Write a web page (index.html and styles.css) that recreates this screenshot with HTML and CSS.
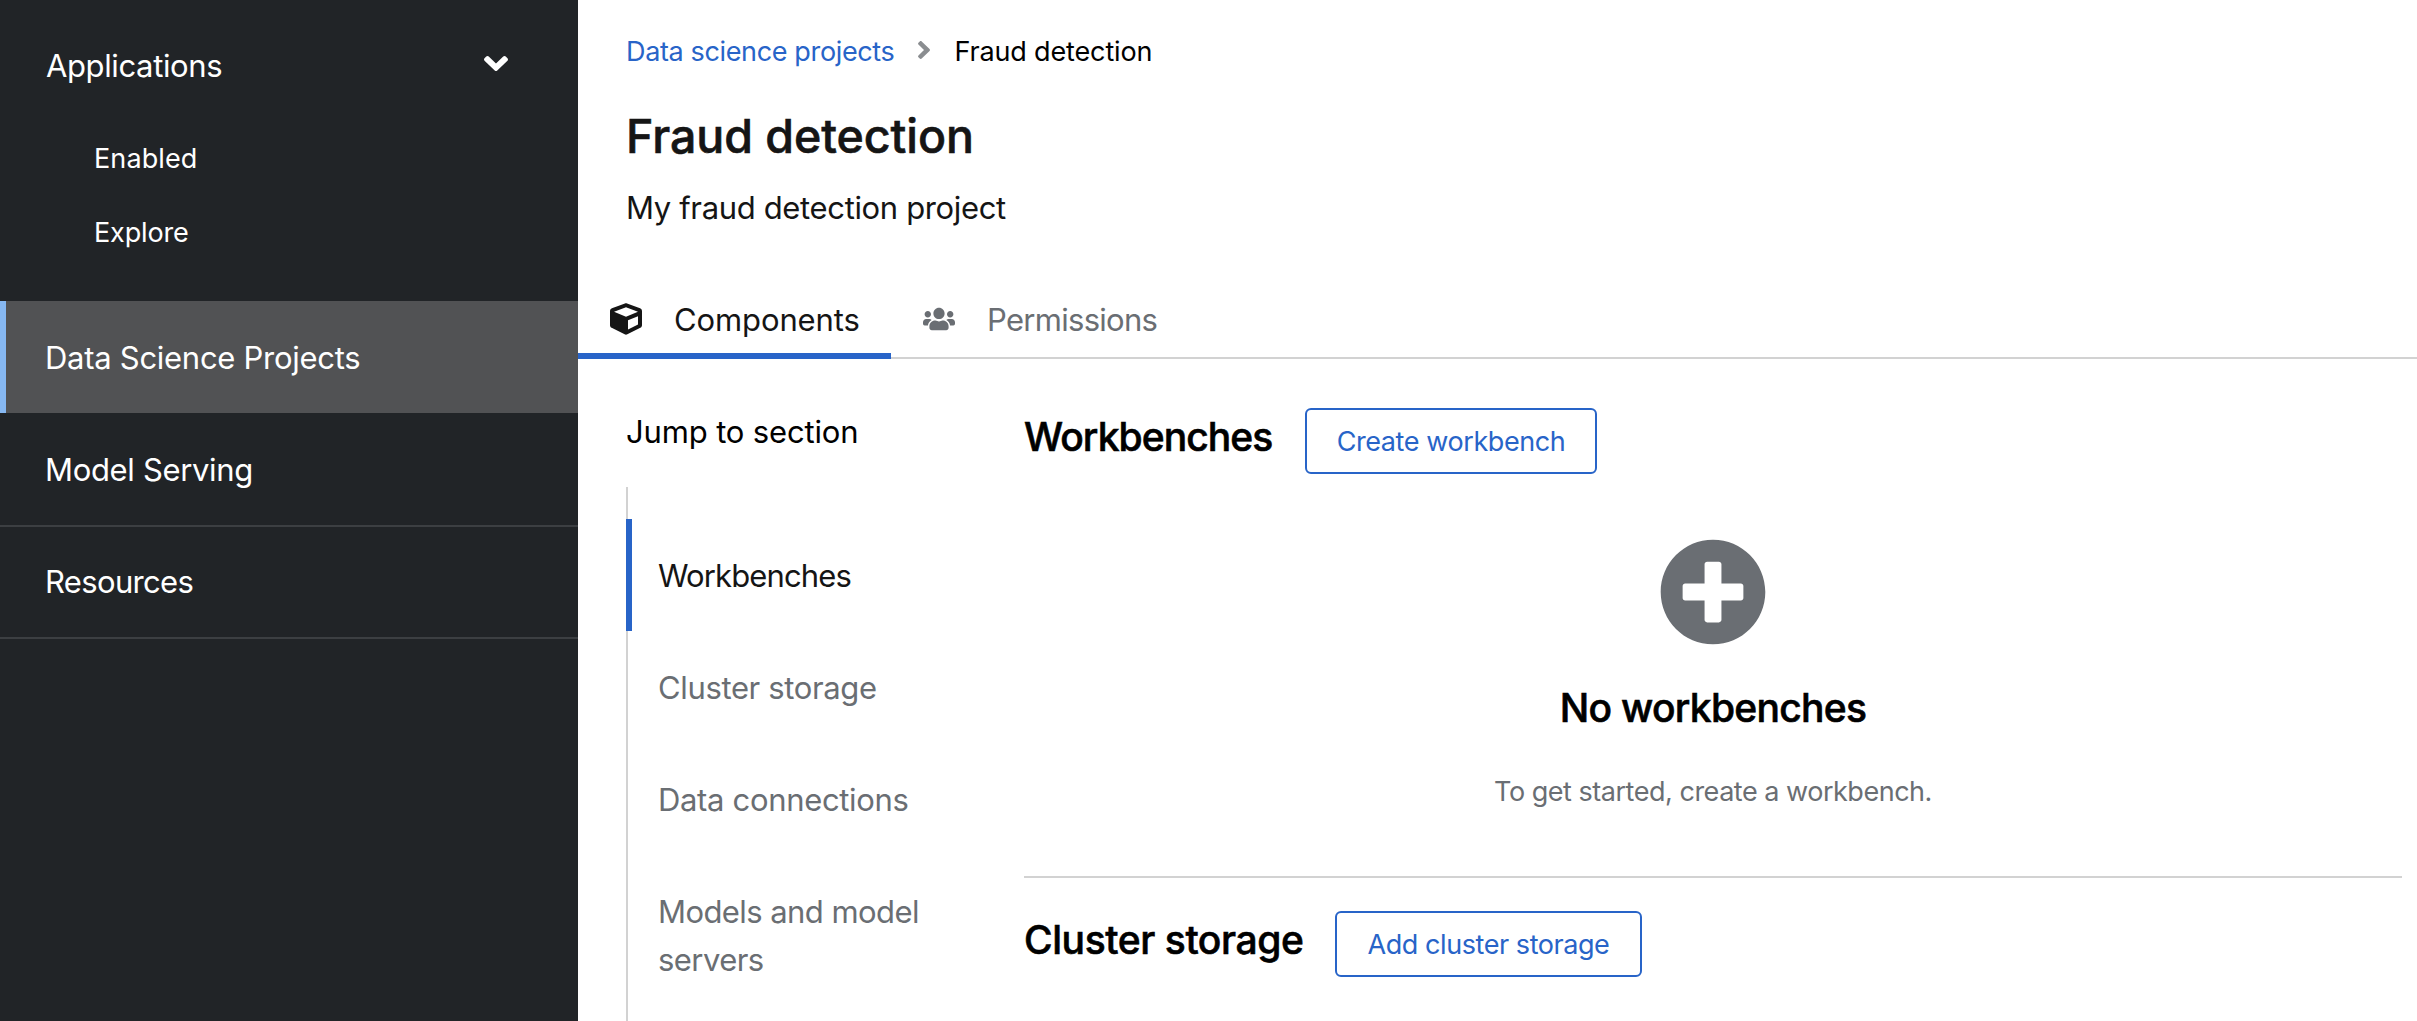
FILE: index.html
```html
<!DOCTYPE html>
<html lang="en">
<head>
<meta charset="utf-8">
<title>Fraud detection</title>
<link rel="stylesheet" href="styles.css">
</head>
<body>
<div class="page">
  <nav class="sidebar">
    <a class="nav-item nav-toggle"><span class="t-applications">Applications</span>
      <svg class="nav-caret" viewBox="0 152 320 208" preserveAspectRatio="none"><path d="M143 352.3L7 216.3c-9.4-9.4-9.4-24.6 0-33.9l22.6-22.6c9.4-9.4 24.6-9.4 33.9 0l96.4 96.4 96.4-96.4c9.4-9.4 24.6-9.4 33.9 0l22.6 22.6c9.4 9.4 9.4 24.6 0 33.9l-136 136c-9.2 9.4-24.4 9.4-33.8 0z"/></svg>
    </a>
    <div class="subnav">
      <a class="subnav-item t-enabled">Enabled</a>
      <a class="subnav-item t-explore">Explore</a>
    </div>
    <a class="nav-item current"><span class="t-dsp">Data Science Projects</span></a>
    <a class="nav-item plain"><span class="t-serving">Model Serving</span></a>
    <a class="nav-item"><span class="t-resources">Resources</span></a>
    <div class="nav-end"></div>
  </nav>

  <main class="main">
    <header class="header">
      <div class="breadcrumb">
        <a class="link t-crumb">Data science projects</a>
        <svg class="crumb-sep" viewBox="24 96 208 320" preserveAspectRatio="none"><path d="M224.3 273l-136 136c-9.4 9.4-24.6 9.4-33.9 0l-22.6-22.6c-9.4-9.4-9.4-24.6 0-33.9l96.4-96.4-96.4-96.4c-9.4-9.4-9.4-24.6 0-33.9L54.3 103c9.4-9.4 24.6-9.4 33.9 0l136 136c9.5 9.4 9.5 24.6.1 34z"/></svg>
        <span class="t-here">Fraud detection</span>
      </div>
      <h1>Fraud detection</h1>
      <p class="description">My fraud detection project</p>
    </header>

    <div class="tabs">
      <a class="tab active">
        <svg class="tab-icon" width="32" height="32" viewBox="0 0 512 512"><path d="M239.1 6.3l-208 78c-18.7 7-31.1 25-31.1 45v225.1c0 18.2 10.3 34.8 26.5 42.9l208 104c13.5 6.8 29.4 6.8 42.9 0l208-104c16.3-8.1 26.5-24.8 26.5-42.9V129.3c0-20-12.4-37.9-31.1-44.9l-208-78C262 2.2 250 2.2 239.1 6.3zM256 68.4l192 72v1.1l-192 78-192-78v-1.1l192-72zm32 356V275.5l160-65v133.9l-160 80z"/></svg>
        <span class="t-components">Components</span>
      </a>
      <a class="tab">
        <svg class="tab-icon" width="32" height="26" viewBox="0 0 640 512"><path d="M96 224c35.3 0 64-28.7 64-64s-28.7-64-64-64-64 28.7-64 64 28.7 64 64 64zm448 0c35.3 0 64-28.7 64-64s-28.7-64-64-64-64 28.7-64 64 28.7 64 64 64zm32 32h-64c-17.6 0-33.5 7.1-45.1 18.6 40.3 22.1 68.9 62 75.1 109.4h66c17.7 0 32-14.3 32-32v-32c0-35.3-28.7-64-64-64zm-256 0c61.9 0 112-50.1 112-112S381.9 32 320 32 208 82.1 208 144s50.1 112 112 112zm76.8 32h-8.3c-20.8 10-43.9 16-68.5 16s-47.6-6-68.5-16h-8.3C179.6 288 128 339.6 128 403.2V432c0 26.5 21.5 48 48 48h288c26.5 0 48-21.5 48-48v-28.8c0-63.6-51.6-115.2-115.2-115.2zm-223.7-13.4C161.5 263.1 145.6 256 128 256H64c-35.3 0-64 28.7-64 64v32c0 17.7 14.3 32 32 32h65.9c6.3-47.4 34.9-87.3 75.2-109.4z"/></svg>
        <span class="t-permissions">Permissions</span>
      </a>
    </div>

    <div class="content">
      <aside class="jump">
        <div class="jump-title">Jump to section</div>
        <div class="jump-list">
          <a class="jump-item selected t-jump-wb">Workbenches</a>
          <a class="jump-item t-jump-cs">Cluster storage</a>
          <a class="jump-item t-jump-dc">Data connections</a>
          <a class="jump-item t-jump-mm">Models and model servers</a>
        </div>
      </aside>

      <div class="sections">
        <section class="section">
          <div class="section-head">
            <h2 class="t-h-wb">Workbenches</h2>
            <button class="button create">Create workbench</button>
          </div>
          <div class="empty">
            <svg class="empty-icon" width="108" height="108" viewBox="0 0 512 512"><path d="M256 8C119 8 8 119 8 256s111 248 248 248 248-111 248-248S393 8 256 8zm144 276c0 6.600-5.400 12-12 12h-92v92c0 6.600-5.400 12-12 12h-56c-6.600 0-12-5.400-12-12v-92h-92c-6.600 0-12-5.400-12-12v-56c0-6.600 5.400-12 12-12h92v-92c0-6.600 5.400-12 12-12h56c6.600 0 12 5.400 12 12v92h92c6.600 0 12 5.400 12 12v56z"/></svg>
            <h3>No workbenches</h3>
            <p class="empty-text">To get started, create a workbench.</p>
          </div>
        </section>
        <section class="section">
          <div class="section-head">
            <h2 class="t-h-cs">Cluster storage</h2>
            <button class="button add">Add cluster storage</button>
          </div>
        </section>
      </div>
    </div>
  </main>
</div>
</body>
</html>
```

FILE: styles.css
```css
* { box-sizing: border-box; }
html, body { height: 100%; }
body {
  margin: 0;
  background: #fff;
  color: #000;
  font-family: Inter, "Liberation Sans", sans-serif;
  font-size: 31px;
  line-height: 48px;
}
h1, h2, h3, p { margin: 0; font-weight: 500; }
h1, h2, h3 { -webkit-text-stroke: .6px currentColor; }
svg { display: block; flex: none; fill: currentColor; }
.page { display: flex; height: 1021px; }

/* Sidebar navigation */
.sidebar {
  flex: none;
  width: 578px;
  padding-top: 8px;
  background: #212427;
  color: #fff;
}
.nav-item {
  display: flex;
  align-items: center;
  height: 112px;
  padding-left: 45px;
  border-top: 2px solid #3c3f42;
}
.nav-toggle { justify-content: space-between; padding: 2px 70px 0 46px; border-color: transparent; }
.nav-caret { width: 24px; height: 15px; margin-bottom: 6px; }
.subnav { padding: 1px 0 32px 94px; }
.subnav-item { display: block; height: 74px; padding-top: 18px; font-size: 27px; line-height: 40px; }
.nav-item.current {
  padding-left: 39px;
  border-top: 0;
  border-left: 6px solid #86b8f2;
  padding-top: 2px;
  background: #515254;
}
.nav-item.plain { border-color: transparent; }
.nav-end { height: 2px; background: #3c3f42; }

/* Project header */
.main { flex: 1; min-width: 0; }
.header { height: 272px; padding: 32px 48px 0; }
.breadcrumb { display: flex; align-items: center; height: 40px; font-size: 27px; line-height: 40px; }
.link { color: #2864c8; }
.crumb-sep { width: 12px; height: 18px; margin: 0 24px 4px; fill: #8a8d90; }
h1 { margin-top: 34px; color: #151515; font-size: 46.5px; line-height: 60px; letter-spacing: -.05px; }
.description { margin-top: 18px; color: #151515; font-weight: 400; letter-spacing: -.35px; }

/* Tabs */
.tabs { display: flex; height: 87px; background: linear-gradient(#d2d2d2, #d2d2d2) 0 100% / 100% 2px no-repeat; }
.tab { display: flex; align-items: center; gap: 32px; padding: 24px 32px 15px; color: #6a6e73; }
.tab-icon { margin-bottom: 2px; }
.tab.active { width: 313px; padding-bottom: 9px; border-bottom: 6px solid #2864c8; color: #151515; }

/* Jump links */
.content { display: flex; padding: 49px 15px 0 48px; }
.jump { flex: none; width: 350px; margin-right: 48px; }
.jump-title { letter-spacing: -.15px; }
.jump-list { height: 534px; margin-top: 31px; padding-top: 32px; background: linear-gradient(#d2d2d2, #d2d2d2) 0 0 / 2px 100% no-repeat; }
.jump-item { display: block; min-height: 112px; padding: 33px 0 0 32px; color: #6a6e73; }
.jump-item.selected { padding-left: 26px; border-left: 6px solid #2864c8; color: #151515; }

/* Project sections */
.sections { flex: 1; min-width: 0; }
.section + .section { padding-top: 33px; border-top: 2px solid #d2d2d2; }
.section-head { display: flex; align-items: flex-start; }
h2, h3 { font-size: 39px; line-height: 52px; }
h2 { padding-top: 3px; white-space: nowrap; }
.button {
  height: 66px;
  padding: 2px 0 0;
  border: 2px solid #2864c8;
  border-radius: 6px;
  background: #fff;
  color: #2864c8;
  font: 27px/40px Inter, "Liberation Sans", sans-serif;
}
.create { width: 292px; letter-spacing: -.42px; }
.add { width: 307px; letter-spacing: -.44px; }
.empty { display: flex; flex-direction: column; align-items: center; padding: 64px 0; }
.empty-icon { fill: #6a6e73; }
h3 { margin-top: 36px; letter-spacing: -.72px; }
.empty-text { margin-top: 38px; color: #6a6e73; font-size: 27px; font-weight: 400; line-height: 40px; letter-spacing: -.48px; }

/* Per-label tracking */
.t-applications { letter-spacing: -.38px; }
.t-enabled { letter-spacing: .1px; }
.t-explore { letter-spacing: -.15px; }
.t-dsp { letter-spacing: -.28px; }
.t-serving { letter-spacing: -.33px; }
.t-resources { letter-spacing: -.66px; }
.t-crumb { letter-spacing: -.36px; }
.t-here { letter-spacing: -.15px; }
.t-components { letter-spacing: -.11px; }
.t-permissions { letter-spacing: -.71px; }
.t-jump-wb { letter-spacing: -.88px; }
.t-jump-cs { letter-spacing: -.36px; }
.t-jump-dc { letter-spacing: -.33px; }
.t-jump-mm { letter-spacing: -.57px; }
.t-h-wb { width: 281px; letter-spacing: -.92px; }
.t-h-cs { width: 311px; letter-spacing: -.42px; }
```
